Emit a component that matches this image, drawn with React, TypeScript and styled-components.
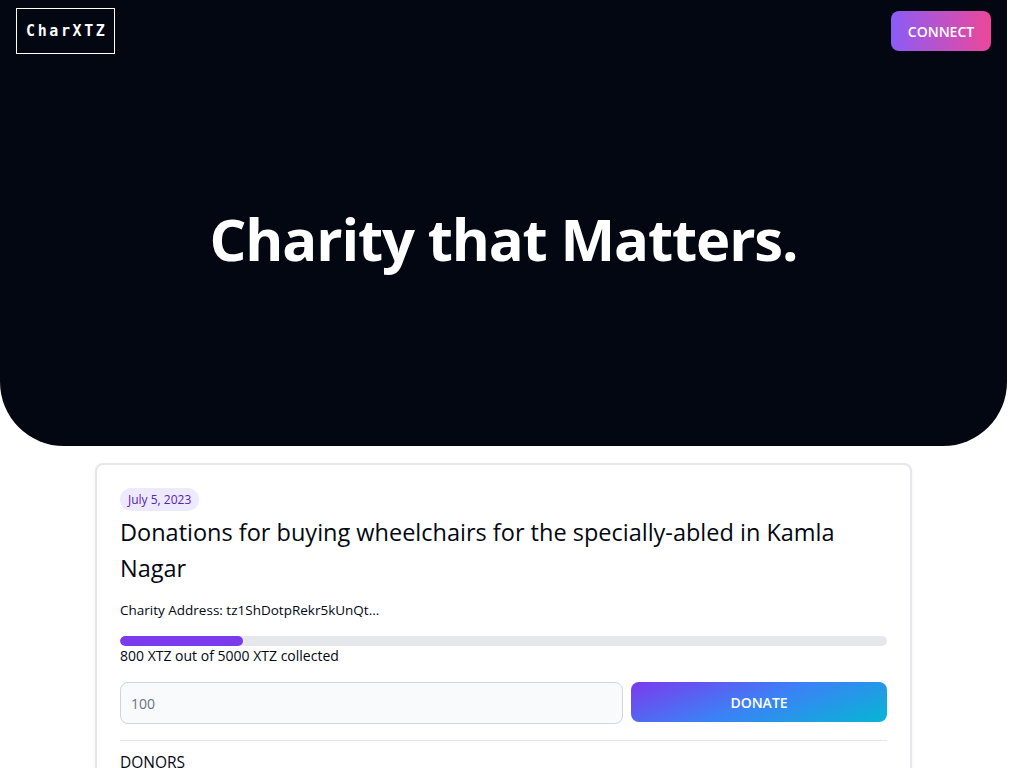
import React from "react";
import styled, { createGlobalStyle } from "styled-components";

const Global = createGlobalStyle`
  html, body { margin: 0; padding: 0; background: #ffffff; }
  body { font-family: "Open Sans", "Noto Sans", sans-serif; color: #030712; }
  * { box-sizing: border-box; }
`;

/* the reference viewport has a 17px classic scrollbar: content area is 1007px wide */
const Page = styled.div`
  width: calc(100% - 17px);
  min-height: 1100px;
  display: flex;
  flex-direction: column;
  align-items: center;
`;

const Hero = styled.section`
  width: 100%;
  height: 446px;
  background: #030712;
  border-radius: 0 0 64px 64px;
  display: flex;
  flex-direction: column;
`;

const Header = styled.header`
  display: flex;
  justify-content: space-between;
  align-items: flex-start;
  padding: 8px 16px 0 16px;
`;

const Logo = styled.div`
  border: 1px solid #ffffff;
  color: #ffffff;
  font-family: "DejaVu Sans Mono", "Liberation Mono", monospace;
  font-weight: 700;
  font-size: 15px;
  letter-spacing: 2.6px;
  line-height: 22px;
  padding: 11px 7px 11px 9px;
`;

const ConnectButton = styled.button`
  margin-top: 3px;
  width: 100px;
  height: 40px;
  border: none;
  border-radius: 8px;
  background: linear-gradient(90deg, #8b5cf6, #ec4899);
  color: #ffffff;
  font-family: inherit;
  font-weight: 600;
  font-size: 14px;
  cursor: pointer;
`;

const HeroBody = styled.div`
  flex: 1;
  display: flex;
  align-items: center;
  justify-content: center;
  padding-bottom: 22px;
`;

const HeroTitle = styled.h1`
  margin: 0;
  color: #ffffff;
  font-size: 58px;
  font-weight: 700;
  line-height: 1;
  letter-spacing: -1.15px;
`;

const Card = styled.article`
  width: 817px;
  margin-top: 17px;
  border: 2px solid #e5e7eb;
  border-radius: 8px;
  box-shadow: 0 1px 3px rgba(0, 0, 0, 0.06);
  padding: 23px 23px 24px 23px;
  display: flex;
  flex-direction: column;
`;

const DatePill = styled.span`
  align-self: flex-start;
  background: #ede9fe;
  color: #5b21b6;
  font-size: 12px;
  line-height: 23px;
  padding: 0 8px;
  border-radius: 999px;
`;

const Title = styled.h2`
  margin: 3px 0 0 0;
  font-size: 23.5px;
  font-weight: 500;
  line-height: 36px;
  color: #030712;
`;

const Address = styled.p`
  margin: 14px 0 0 0;
  font-size: 13.5px;
  line-height: 20px;
`;

const Track = styled.div`
  margin-top: 16px;
  height: 10px;
  border-radius: 999px;
  background: #e5e7eb;
  overflow: hidden;
`;

const Fill = styled.div`
  height: 100%;
  border-radius: 999px;
  background: #7c3aed;
`;

const Collected = styled.p`
  margin: 0;
  font-size: 14px;
  line-height: 20px;
`;

const DonateRow = styled.form`
  margin-top: 16px;
  display: flex;
  gap: 8px;
`;

const AmountInput = styled.input`
  flex: 1;
  height: 42px;
  background: #f9fafb;
  border: 1px solid #d1d5db;
  border-radius: 8px;
  padding: 0 10px;
  font-family: inherit;
  font-size: 14px;
  color: #111827;
  outline: none;
  &::placeholder { color: #6b7280; }
`;

const DonateButton = styled.button`
  width: 256px;
  height: 40px;
  border: none;
  border-radius: 8px;
  background: linear-gradient(160deg, #7c3aed 0%, #3b82f6 50%, #06b6d4 100%);
  color: #ffffff;
  font-family: inherit;
  font-weight: 600;
  font-size: 14px;
  cursor: pointer;
`;

const Divider = styled.hr`
  margin: 16px 0 0 0;
  border: none;
  border-top: 1px solid #e5e7eb;
`;

const SectionLabel = styled.h3`
  margin: 9px 0 0 0;
  font-size: 15.5px;
  font-weight: 400;
  line-height: 24px;
`;

const DonorList = styled.ul`
  list-style: none;
  margin: 8px 0 0 0;
  padding: 0;
  font-size: 14px;
  line-height: 24px;
  color: #374151;
`;

export default function App() {
  const collected = 800;
  const goal = 5000;
  return (
    <>
      <Global />
      <Page>
        <Hero>
          <Header>
            <Logo>CharXTZ</Logo>
            <ConnectButton type="button">CONNECT</ConnectButton>
          </Header>
          <HeroBody>
            <HeroTitle>Charity that Matters.</HeroTitle>
          </HeroBody>
        </Hero>
        <Card>
          <DatePill>July 5, 2023</DatePill>
          <Title>Donations for buying wheelchairs for the specially-abled in Kamla Nagar</Title>
          <Address>Charity Address: tz1ShDotpRekr5kUnQt...</Address>
          <Track>
            <Fill style={{ width: `${(collected / goal) * 100}%` }} />
          </Track>
          <Collected>
            {collected} XTZ out of {goal} XTZ collected
          </Collected>
          <DonateRow onSubmit={(e) => e.preventDefault()}>
            <AmountInput type="number" placeholder="100" />
            <DonateButton type="submit">DONATE</DonateButton>
          </DonateRow>
          <Divider />
          <SectionLabel>DONORS</SectionLabel>
          <DonorList>
            <li>tz1VSUr8wwNhLAzempoch5d6hLRiTh8Cjcjb — 500 XTZ</li>
            <li>tz1aSkwEot3L2kmUvcoxzjMomb9mvBNuzFK6 — 300 XTZ</li>
          </DonorList>
        </Card>
      </Page>
    </>
  );
}
